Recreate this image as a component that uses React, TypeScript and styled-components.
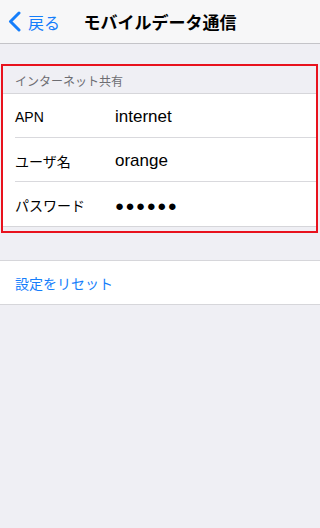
import styled, { createGlobalStyle } from "styled-components";

const GlobalStyle = createGlobalStyle`
    html, body {
        margin: 0;
        padding: 0;
        background: #efeff4;
    }
    body {
        font-family: "Liberation Sans", "Noto Sans CJK JP", sans-serif;
        -webkit-font-smoothing: antialiased;
    }
`;

const Page = styled.div`
    width: 320px;
    height: 528px;
    background: #efeff4;
    display: flex;
    flex-direction: column;
    overflow: hidden;
`;

const NavBar = styled.div`
    height: 43px;
    background: #f7f7f8;
    border-bottom: 1px solid #c4c4c8;
    display: flex;
    align-items: center;
    position: relative;
    flex-shrink: 0;
`;

const BackButton = styled.div`
    display: flex;
    align-items: center;
    gap: 7px;
    padding-left: 8px;
    color: #157efb;
    font-size: 16px;
`;

const Title = styled.div`
    position: absolute;
    left: 0;
    right: 0;
    text-align: center;
    font-size: 17px;
    font-weight: bold;
    color: #000;
    pointer-events: none;
`;

const Highlight = styled.div`
    margin: 20px 2px 0 1px;
    border: 2px solid #e8121d;
    padding-bottom: 4px;
    background: #efeff4;
`;

const SectionHeader = styled.div`
    height: 28px;
    display: flex;
    align-items: center;
    padding-left: 12px;
    padding-top: 1px;
    font-size: 12px;
    color: #6d6d72;
    border-bottom: 1px solid #d6d6da;
    box-sizing: border-box;
`;

const Group = styled.div`
    background: #fff;
    border-bottom: 1px solid #d6d6da;
`;

const Row = styled.div<{ last?: boolean }>`
    height: 44px;
    display: flex;
    align-items: center;
    margin-left: 12px;
    padding-top: 2px;
    box-sizing: border-box;
    border-bottom: ${(p) => (p.last ? "none" : "1px solid #d9d9dd")};
`;

const Label = styled.div`
    width: 100px;
    font-size: 14px;
    color: #000;
`;

const Value = styled.div`
    font-size: 17px;
    color: #000;
`;

const Dots = styled.div`
    font-size: 15px;
    letter-spacing: 1.5px;
    color: #000;
`;

const ResetGroup = styled.div`
    margin-top: 27px;
    background: #fff;
    border-top: 1px solid #d6d6da;
    border-bottom: 1px solid #d6d6da;
    height: 43px;
    display: flex;
    align-items: center;
    padding-left: 15px;
    font-size: 14px;
    color: #157efb;
`;

export default function App() {
    return (
        <Page>
            <GlobalStyle />
            <NavBar>
                <BackButton>
                    <svg width="13" height="21" viewBox="0 0 13 21">
                        <path
                            d="M11 2 L2.5 10.5 L11 19"
                            fill="none"
                            stroke="#157efb"
                            strokeWidth="3"
                            strokeLinecap="round"
                            strokeLinejoin="round"
                        />
                    </svg>
                    戻る
                </BackButton>
                <Title>モバイルデータ通信</Title>
            </NavBar>
            <Highlight>
                <SectionHeader>インターネット共有</SectionHeader>
                <Group>
                    <Row>
                        <Label>APN</Label>
                        <Value>internet</Value>
                    </Row>
                    <Row>
                        <Label>ユーザ名</Label>
                        <Value>orange</Value>
                    </Row>
                    <Row last>
                        <Label>パスワード</Label>
                        <Dots>●●●●●●</Dots>
                    </Row>
                </Group>
            </Highlight>
            <ResetGroup>設定をリセット</ResetGroup>
        </Page>
    );
}
